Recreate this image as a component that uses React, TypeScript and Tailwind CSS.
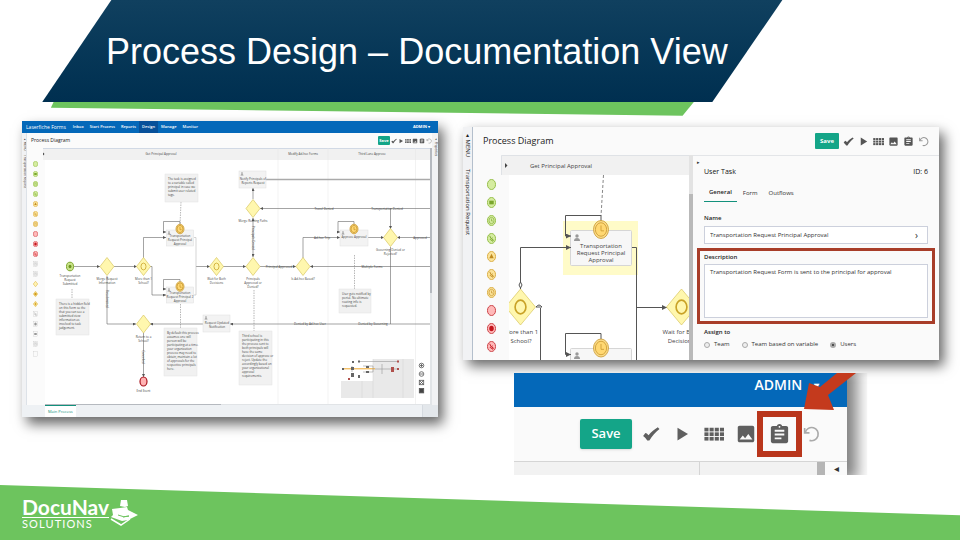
import type { ReactNode } from 'react';
import { MdAssignment, MdImage } from 'react-icons/md';

type Point = [number, number];

function CheckIcon({ className }: { className: string }) {
  return (
    <svg viewBox="0 0 24 24" className={className} fill="currentColor">
      <path d="M1.5 14.5l3-4c1.800 .4 3 1.500 4.200 3C12.500 9 16.500 5.800 21 3l2.300 2.300C18 9.500 13.500 14.800 9.800 20.800H7C5.500 18 3.800 16 1.500 14.500z" />
    </svg>
  );
}

function PlayIcon({ className }: { className: string }) {
  return (
    <svg viewBox="0 0 24 24" className={className} fill="currentColor">
      <path d="M6 3.500v17L20 12z" />
    </svg>
  );
}

function GridIcon({ className }: { className: string }) {
  return (
    <svg viewBox="0 0 24 24" className={className} fill="currentColor">
      {[4.5, 10, 15.5].map((y) =>
        [0.5, 6.7, 12.900, 19.1].map((x) => (
          <rect key={`${x}-${y}`} x={x} y={y} width="4.900" height="4.400" />
        )),
      )}
    </svg>
  );
}

function UndoIcon({ className }: { className: string }) {
  return (
    <svg viewBox="0 0 24 24" className={className} fill="none" stroke="currentColor" strokeWidth="2.200">
      <path d="M3.500 4v6.500H10" />
      <path d="M4.300 10A8.800 8.800 0 1 1 10 20.500" />
    </svg>
  );
}

function Toolbar({ button, icon, gap }: { button: string; icon: string; gap: string }) {
  return (
    <div className={`flex items-center text-[#555] ${gap}`}>
      <button className={`bg-[#14a588] font-bold text-white ${button}`}>Save</button>
      <button aria-label="Validate">
        <CheckIcon className={icon} />
      </button>
      <button aria-label="Run">
        <PlayIcon className={icon} />
      </button>
      <button aria-label="Grid">
        <GridIcon className={icon} />
      </button>
      <button aria-label="Image">
        <MdImage className={icon} />
      </button>
      <button aria-label="Documentation">
        <MdAssignment className={icon} />
      </button>
      <button aria-label="Undo" className="text-[#999]">
        <UndoIcon className={icon} />
      </button>
    </div>
  );
}

function Label({ x, y, lines, size = 'text-[3px]', step = 4, anchor = 'middle' }: {
  x: number;
  y: number;
  lines: string[];
  size?: string;
  step?: number;
  anchor?: 'start' | 'middle';
}) {
  return (
    <text textAnchor={anchor} className={`fill-[#444] ${size}`}>
      {lines.map((line, i) => (
        <tspan key={line} x={x} y={y + i * step}>
          {line}
        </tspan>
      ))}
    </text>
  );
}

function Note({ x, y, w, h, lines, step = 4 }: {
  x: number;
  y: number;
  w: number;
  h: number;
  lines: string[];
  step?: number;
}) {
  return (
    <g>
      <rect x={x} y={y} width={w} height={h} fill="#f1f1f1" stroke="#e3e3e3" strokeWidth="0.5" />
      <Label x={x + 3} y={y + 6} lines={lines} anchor="start" step={step} />
    </g>
  );
}

function Diamond({ at, rx = 7, ry = 9, ring }: { at: Point; rx?: number; ry?: number; ring?: boolean }) {
  const [x, y] = at;
  return (
    <g stroke="#d9c560">
      <path d={`M${x - rx} ${y}L${x} ${y - ry}L${x + rx} ${y}L${x} ${y + ry}Z`} fill="#fff7ae" strokeWidth="0.7" />
      {ring && (
        <ellipse cx={x} cy={y} rx={rx * 0.36} ry={ry * 0.38} fill="none" stroke="#c9a227" strokeWidth={rx * 0.11} />
      )}
    </g>
  );
}

function Clock({ at, rx, ry }: { at: Point; rx: number; ry: number }) {
  const [x, y] = at;
  return (
    <g stroke="#c9982f" fill="#fbdc8a" strokeWidth="0.8">
      <ellipse cx={x} cy={y} rx={rx} ry={ry} />
      <ellipse cx={x} cy={y} rx={rx * 0.75} ry={ry * 0.75} fill="#ffd873" />
      <path d={`M${x} ${y - ry * 0.45}V${y + ry * 0.15}H${x + rx * 0.4}`} fill="none" />
    </g>
  );
}

function Person({ x, y, s = 1 }: { x: number; y: number; s?: number }) {
  return (
    <g fill="#999">
      <circle cx={x} cy={y - 2 * s} r={1.700 * s} />
      <path d={`M${x - 3 * s} ${y + 3 * s}q0 ${-3 * s} ${3 * s} ${-3 * s}t${3 * s} ${3 * s}z`} />
    </g>
  );
}

const shapes = {
  green: 'fill-[#d5ecA0] stroke-[#8fbb3f]',
  amber: 'fill-[#fbe39a] stroke-[#d8a93c]',
  red: 'fill-[#ffb9b9] stroke-[#c8373c]',
  box: 'fill-[#fafafa] stroke-[#b5b5b5]',
  gold: 'fill-[#fff3b0] stroke-[#dcae3a]',
};

type Kind = { tone: keyof typeof shapes; mark: string };

const palette: Kind[] = [
  { tone: 'green', mark: '' },
  { tone: 'green', mark: 'mail' },
  { tone: 'green', mark: 'clock' },
  { tone: 'green', mark: 'signal' },
  { tone: 'amber', mark: 'triangle' },
  { tone: 'amber', mark: 'signal' },
  { tone: 'amber', mark: 'clock' },
  { tone: 'red', mark: '' },
  { tone: 'red', mark: 'dot' },
  { tone: 'red', mark: 'signal' },
  { tone: 'box', mark: 'clock' },
  { tone: 'box', mark: 'clock' },
  { tone: 'gold', mark: '' },
  { tone: 'gold', mark: 'dot' },
  { tone: 'gold', mark: 'plus' },
  { tone: 'box', mark: 'signal' },
  { tone: 'box', mark: 'dot' },
  { tone: 'box', mark: 'mail' },
  { tone: 'box', mark: 'clock' },
  { tone: 'box', mark: '' },
];

const ink = {
  green: '#7aa62c',
  amber: '#c08a1e',
  red: '#c4141c',
  box: '#999',
  gold: '#d29a1c',
};

function PaletteItem({ item, className }: { item: Kind; className: string }) {
  const color = ink[item.tone];
  return (
    <svg viewBox="0 0 20 24" preserveAspectRatio="none" className={className}>
      {item.tone === 'gold' && <path d="M1 12L10 1L19 12L10 23Z" className={shapes.gold} strokeWidth="2" />}
      {item.tone === 'box' && <rect x="3" y="3" width="14" height="18" className={shapes.box} strokeWidth="1" />}
      {item.tone !== 'gold' && item.tone !== 'box' && (
        <ellipse cx="10" cy="12" rx="9" ry="11" className={shapes[item.tone]} strokeWidth="2" />
      )}
      {item.mark === 'mail' && <rect x="5" y="8" width="10" height="8" fill={color} />}
      {item.mark === 'dot' && <ellipse cx="10" cy="12" rx="5" ry="6" fill={color} />}
      {item.mark === 'triangle' && <path d="M5 16L10 6L15 16Z" fill={color} />}
      {item.mark === 'signal' && <path d="M6 6l3 6-2 2 6 4 1-3-4-2 2-3" fill="none" stroke={color} strokeWidth="2" />}
      {item.mark === 'plus' && <path d="M10 6v12M5 12h10" stroke={color} strokeWidth="3" />}
      {item.mark === 'clock' && (
        <g fill="none" stroke={color} strokeWidth="1.300">
          <ellipse cx="10" cy="12" rx="5.500" ry="7" />
          <path d="M10 8v5h3" />
        </g>
      )}
    </svg>
  );
}

function ArrowHead({ id, size }: { id: string; size: number }) {
  return (
    <marker id={id} viewBox="0 0 6 6" refX="6" refY="3" markerWidth={size} markerHeight={size} markerUnits="userSpaceOnUse" orient="auto-start-reverse">
      <path d="M0 0L6 3L0 6Z" fill="#555" />
    </marker>
  );
}

const flows = [
  'M74 266.500H100',
  'M114 266.500H137',
  'M143.500 258V237.500H166',
  'M150 266.500H152V295H166',
  'M196 266.500H210',
  'M223 266.500H246',
  'M260 266.500H296',
  'M431 266.500H310',
  'M253 199V188',
  'M303 258V237.500H340',
  'M368 237.500H384',
  'M431 237.500H397',
  'M431 208.500H260',
  'M390.500 208.500V229',
  'M107 276V324H136',
  'M203 324H150',
  'M431 324H230',
  'M143.500 333V377',
  'M180 225V221.500H163.500V232H166',
  'M180 282V279.500H163.500V289H166',
  'M354 225V221.500H338V232H340',
];

function OverviewDiagram() {
  return (
    <svg viewBox="43 148 389 257" className="block min-w-0 flex-1" role="img" aria-label="Process overview">
      <defs>
        <ArrowHead id="tip" size={3} />
      </defs>
      <rect x="45" y="160" width="386" height="245" fill="#fff" />
      <rect x="43" y="148" width="388" height="12" fill="#f1f1f1" />
      <path d="M43 148.500H431" stroke="#c3cfe0" strokeWidth="0.7" />
      <path d="M278 148V405M328 148V405M415.500 148V405" stroke="#e4e4e4" strokeWidth="0.5" />
      <path d="M43 152.500l1.500 1.500-1.500 1.500z" fill="#444" />
      <Label x={161} y={155} lines={['Get Principal Approval']} />
      <Label x={303} y={155} lines={['Modify Ad-hoc Forms']} />
      <Label x={372} y={155} lines={['Third Lane Approve']} />

      <g fill="none" stroke="#666" strokeWidth="0.6">
        {flows.map((d) => (
          <path key={d} d={d} markerEnd="url(#tip)" />
        ))}
        <path d="M253 218V257" markerStart="url(#tip)" markerEnd="url(#tip)" />
        <path d="M194 237.500H196V295H194" stroke="#bbb" />
        <path d="M390.500 247V324" />
        <path d="M266 179.500H431" stroke="#aaa" strokeWidth="1.500" />
        <path d="M181 202L180 225M180.500 304V328M254 290V331M354.500 255V289M72 289V299" stroke="#888" strokeDasharray="1.500 1" />
      </g>

      <Note x={165} y={174} w={33} h={28} lines={['The task is assigned', 'to a variable called', 'principal in case we', 'submit user related', 'tags.']} />
      <Note x={56} y={299} w={33} h={36} lines={['There is a hidden field', 'on this form so the', 'that you can see a', 'submitted view', 'information as', 'involved to task', 'judgement.']} />
      <Note x={164} y={328} w={33} h={48} lines={['By default this process', 'assumes one will', 'person will be', 'participating at a time.', 'your organization', 'process may need to', 'obtain, maintain a lot', 'of approvals for the', 'respective principals', 'here.']} />
      <Note x={239} y={331} w={33} h={54} lines={['Third school is', 'participating in this', 'the process sent to', 'both principals will', 'have the same', 'decision of approve or', 'reject. Update the', 'accordingly based on', 'your organizational', 'approval', 'requirements.']} />
      <Note x={339} y={289} w={32} h={24} lines={['User gets notified by', 'portal. No ultimate', 'routing info is', 'requested.']} />

      <g fill="#f3f3f3" stroke="#dedede" strokeWidth="0.5">
        <rect x="166.500" y="230" width="27" height="16" />
        <rect x="166.500" y="287" width="27" height="16" />
        <rect x="239" y="171" width="27" height="17" />
        <rect x="203" y="315" width="27" height="17" />
        <rect x="340" y="230" width="28" height="16" />
      </g>
      <Person x={169} y={233} s={0.5} />
      <Person x={169} y={290} s={0.5} />
      <Person x={242} y={174} s={0.5} />
      <Person x={206} y={318} s={0.5} />
      <Person x={343} y={233} s={0.5} />
      <Clock at={[180, 229]} rx={4} ry={4.800} />
      <Clock at={[180, 286.500]} rx={4} ry={4.800} />
      <Clock at={[354, 229]} rx={4} ry={4.800} />
      <Label x={180} y={237} lines={['Transportation', 'Request Principal', 'Approval']} />
      <Label x={180} y={294} lines={['Transportation', 'Request Principal 2', 'Approval']} />
      <Label x={253} y={180} lines={['Notify Principals of', 'Reports Request']} />
      <Label x={217} y={324} lines={['Request Updated', 'Notification']} />
      <Label x={354} y={238} lines={['Approve Approval']} />

      <Diamond at={[107, 266.500]} />
      <Diamond at={[143.500, 266.500]} ring />
      <Diamond at={[216.500, 266.500]} ring />
      <Diamond at={[253, 266.500]} />
      <Diamond at={[303, 266.500]} />
      <Diamond at={[253, 208.500]} />
      <Diamond at={[390.500, 237.500]} />
      <Diamond at={[143.500, 324]} />
      <ellipse cx="70" cy="266.500" rx="3.500" ry="4.300" fill="#c9e48a" stroke="#7ba428" />
      <ellipse cx="70" cy="266.500" rx="1.500" ry="1.800" fill="#6d9420" />
      <ellipse cx="143.500" cy="381.500" rx="3.500" ry="4.500" fill="#ffb3b3" stroke="#a8141e" strokeWidth="1.200" />

      <Label x={70} y={277} lines={['Transportation', 'Request', 'Submitted']} />
      <Label x={107} y={280} lines={['Merge Request', 'Information']} />
      <Label x={143.500} y={280} lines={['More than 1', 'School?']} />
      <Label x={216.500} y={280} lines={['Wait for Both', 'Decisions']} />
      <Label x={253} y={280} lines={['Principals', 'Approved or', 'Denied?']} />
      <Label x={303} y={280} lines={['Is Ad-hoc Based?']} />
      <Label x={253} y={222} lines={['Merge Routing Paths']} />
      <Label x={390.500} y={251} lines={['Governing Denied or', 'Rejected?']} />
      <Label x={143.500} y={338} lines={['Return to a', 'School?']} />
      <Label x={143.500} y={392} lines={['End Event']} />
      <Label x={279} y={267.500} lines={['Principal Approved']} />
      <Label x={324} y={209.500} lines={['Travel Denied']} />
      <Label x={387} y={209.500} lines={['Transportation Denied']} />
      <Label x={322} y={238.500} lines={['Ad-hoc Trip']} />
      <Label x={420} y={238.500} lines={['Approved']} />
      <Label x={372} y={267.500} lines={['Multiple Forms']} />
      <Label x={310} y={325} lines={['Denied by Ad-hoc User']} />
      <Label x={373} y={325} lines={['Denied by Governing']} />
      <g textAnchor="middle" className="fill-[#444] text-[3px]">
        <text transform="translate(252 238) rotate(90)">Principals Denied</text>
        <text transform="translate(106 299) rotate(90)">Resubmitted</text>
        <text transform="translate(142 357) rotate(90)">Cancelled</text>
      </g>

      <rect x="341" y="359" width="73" height="39" fill="#e9e9e9" />
      <rect x="341" y="359" width="32" height="22" fill="#fff" />
      <path d="M362 381V398M373 359V398M403 359V398" stroke="#d0d0d0" strokeWidth="0.5" />
      <path d="M343 368.800H375" stroke="#f0a92e" strokeWidth="1" />
      <path d="M359 361.500H398M375 369H398M363 366h10v6h-10M352 366v6M382 364v10" fill="none" stroke="#999" strokeWidth="0.6" />
      <path d="M342 368h2v2h-2zM351 367h3v3h-3zM358 360.500h2v2h-2zM366 366h3v2h-3zM366 371h3v2h-3zM352 361h2v2h-2zM351 373h3v4h-3zM358 375h2v3h-2z" fill="#666" />
      <path d="M348 378h2v2h-2zM397 360.500h2v2h-2zM391 367h3v5h-3zM397 368h2v2h-2z" fill="#b0504c" />
      <g fill="none" stroke="#555" strokeWidth="0.8">
        <circle cx="421.500" cy="365.500" r="2.300" />
        <path d="M420 365.500H423M421.500 364V367M420 374H423M420 381l3 3m0-3l-3 3" />
        <circle cx="421.500" cy="374" r="2.300" />
        <rect x="419.300" y="380.300" width="4.400" height="4.400" />
        <rect x="419.300" y="388.500" width="4.400" height="4.400" fill="#444" />
      </g>
      <path d="M431 148V293" stroke="#b5b9bf" strokeWidth="2" />
      <path d="M431 293V405" stroke="#e1e4e7" strokeWidth="2" />
      <path d="M45 405H221" stroke="#b5b9bf" strokeWidth="2" />
      <path d="M221 405H431" stroke="#e1e4e7" strokeWidth="2" />
    </svg>
  );
}

function SideStrip({ className, children }: { className: string; children: ReactNode }) {
  return (
    <aside className={`flex shrink-0 items-center overflow-hidden whitespace-nowrap bg-[#f1f2f4] [writing-mode:vertical-rl] ${className}`}>
      {children}
    </aside>
  );
}

function OverviewPanel() {
  const nav = ['Inbox', 'Start Process', 'Reports', 'Design', 'Manage', 'Monitor'];
  return (
    <section className="flex flex-col self-start bg-[#fbfbfb] text-[4px] leading-none shadow-[5px_7px_12px_rgba(0,0,0,0.6)]">
      <header className="flex h-3 items-center bg-[#0468b9] pl-1 pr-2 text-white">
        <strong className="text-[5px] font-normal">Laserfiche Forms</strong>
        <nav className="ml-1 flex items-center font-semibold">
          {nav.map((item) => (
            <a key={item} href="#" className={item === 'Design' ? 'bg-[#07509a] px-[3px] py-1' : 'px-[3px] py-1'}>
              {item}
            </a>
          ))}
        </nav>
        <span className="ml-auto font-bold">ADMIN ▾</span>
      </header>
      <div className="flex">
        <SideStrip className="w-[5px] gap-1 border-r border-[#dde2e8] pt-1 text-[3px] text-[#333]">
          <span>▴ MENU</span>
          <span>Transportation Request</span>
        </SideStrip>
        <div className="min-w-0 flex-1">
          <div className="flex h-[15px] items-center justify-between pl-1">
            <h2 className="text-[5px] text-[#222]">Process Diagram</h2>
            <Toolbar button="h-[9px] w-3 rounded-[1px]" icon="size-[6px]" gap="gap-px" />
          </div>
          <div className="flex">
            <div className="flex w-4 shrink-0 flex-col items-center gap-1 pt-[13px]">
              {palette.map((item, i) => (
                <PaletteItem key={i} item={item} className="h-[6px] w-[5px]" />
              ))}
            </div>
            <OverviewDiagram />
          </div>
        </div>
        <SideStrip className="w-[6px] pt-1 text-[3px] text-[#333]">
          <span>◂ Properties</span>
        </SideStrip>
      </div>
      <footer className="flex h-3 justify-between bg-[#eef1f4] pl-[23px]">
        <button className="border-t border-[#12917c] bg-white px-[3px] text-[#12917c]">Main Process</button>
        <span className="w-4 border-l border-[#d5dae0] bg-[#e3e7eb]" />
      </footer>
    </section>
  );
}

function DetailDiagram() {
  return (
    <svg viewBox="501 155 188 205" className="block min-w-0 flex-1" role="img" aria-label="Get Principal Approval">
      <defs>
        <ArrowHead id="tip-large" size={5} />
      </defs>
      <rect x="501" y="155" width="188" height="20" fill="#f1f1f1" />
      <rect x="509" y="175" width="180" height="185" fill="#fff" />
      <path d="M501.500 175V155.500H689" fill="none" stroke="#dfe2e6" />
      <path d="M505 163l2.500 2.500-2.500 2.500z" fill="#444" />
      <Label x={561} y={168} lines={['Get Principal Approval']} size="text-[6px]" />

      <rect x="563" y="221" width="75" height="54" fill="#fffbc8" />
      <g fill="#f7f7f7" stroke="#d6d6d6">
        <rect x="570.500" y="230.500" width="61" height="35" rx="1" />
        <rect x="570.500" y="348.500" width="61" height="20" rx="1" />
      </g>
      <g fill="none" stroke="#555" strokeWidth="1">
        <path d="M603.500 175L601 216" stroke="#888" strokeDasharray="3 2" />
        <path d="M601 221V215.500H565.500V236H571" markerEnd="url(#tip-large)" />
        <path d="M601 339V333.500H565.500V354.500H571" markerEnd="url(#tip-large)" />
        <path d="M520.500 289V247.500H571" markerEnd="url(#tip-large)" />
        <path d="M632 247.500H636.500V360" />
        <path d="M636.500 307.500H667" markerEnd="url(#tip-large)" />
        <path d="M536 307q3-4 6 0h-6M540.500 308V360" />
        <path d="M520.500 282l1.500 3-1.500 3-1.500-3z" fill="#fff" />
      </g>
      <Person x={577} y={238} />
      <Person x={577} y={356} />
      <Clock at={[601, 229.500]} rx={7.500} ry={9} />
      <Clock at={[601, 348]} rx={7.500} ry={9} />
      <Label x={601} y={248} lines={['Transportation', 'Request Principal', 'Approval']} size="text-[6px]" step={7} />
      <svg x="509" y="280" width="180" height="80" viewBox="509 280 180 80">
        <Diamond at={[520.500, 307]} rx={15} ry={18} ring />
        <Diamond at={[681.500, 307]} rx={15} ry={18} ring />
        <Label x={521} y={334} lines={['More than 1', 'School?']} size="text-[6px]" step={9} />
        <Label x={681} y={334} lines={['Wait for Both', 'Decisions']} size="text-[6px]" step={9} />
      </svg>
    </svg>
  );
}

function TaskProperties() {
  return (
    <form className="flex-1 border-t border-[#e3e5e8] px-1 text-[6px] leading-[7px] text-[#333]">
      <div className="pt-1 text-[5px] leading-[5px]">▸</div>
      <div className="flex justify-between px-[7px] pt-[2px] text-[7px] leading-[9px] text-[#111]">
        <h3>User Task</h3>
        <span>ID: 6</span>
      </div>
      <div className="mt-3 flex gap-1 px-[7px] leading-[9px]">
        <button type="button" className="border-b border-[#12917c] px-[5px] pb-1 font-semibold text-[#222]">
          General
        </button>
        <button type="button" className="px-[2px] pb-1">
          Form
        </button>
        <button type="button" className="px-[5px] pb-1">
          Outflows
        </button>
      </div>
      <div className="mt-[13px] px-[7px]">
        <label htmlFor="task-name" className="block font-semibold text-[#222]">
          Name
        </label>
        <div className="mt-1 flex h-[18px] items-center border border-[#ccd0dc] bg-white px-[5px]">
          <input id="task-name" defaultValue="Transportation Request Principal Approval" className="min-w-0 flex-1 outline-none" />
          <span className="px-1 text-[10px]">›</span>
        </div>
      </div>
      <div className="mt-1 border-[3px] border-[#a83d29] px-1 pb-[3px] pt-px">
        <label htmlFor="task-description" className="block py-[2px] font-semibold text-[#222]">
          Description
        </label>
        <textarea
          id="task-description"
          defaultValue="Transportation Request Form is sent to the principal for approval"
          className="mt-px block h-[54px] w-full resize-none border border-[#ccd0dc] bg-white px-[5px] py-1 outline-none"
        />
      </div>
      <fieldset className="mt-[5px] px-[7px]">
        <legend className="font-semibold text-[#222]">Assign to</legend>
        <div className="mt-[5px] flex gap-3">
          {['Team', 'Team based on variable', 'Users'].map((option) => (
            <label key={option} className="flex items-center gap-1">
              <input
                type="radio"
                name="assign"
                defaultChecked={option === 'Users'}
                className="size-[6px] appearance-none rounded-full border border-[#aaa] bg-[#eee] checked:border-2 checked:bg-[#333]"
              />
              {option}
            </label>
          ))}
        </div>
      </fieldset>
    </form>
  );
}

function DetailPanel() {
  return (
    <section className="flex bg-[#fafafa] shadow-[5px_6px_12px_rgba(0,0,0,0.6)]">
      <SideStrip className="w-[10px] gap-3 border-r border-[#b4bfcc] pt-1 text-[6px] leading-none text-[#222]">
        <span>▴ MENU</span>
        <span>Transportation Request</span>
      </SideStrip>
      <div className="min-w-0 flex-1">
        <div className="flex h-7 items-center justify-between pl-[10px] pr-[10px]">
          <h2 className="text-[9px] text-[#222]">Process Diagram</h2>
          <Toolbar button="h-4 w-6 rounded-[1px] text-[6px]" icon="size-[11px]" gap="gap-1" />
        </div>
        <div className="flex">
          <div className="flex min-w-0 basis-[216px]">
            <div className="flex w-7 shrink-0 flex-col items-center gap-[7px] pl-2 pt-6">
              {palette.slice(0, 10).map((item, i) => (
                <PaletteItem key={i} item={item} className="h-[11px] w-[9px]" />
              ))}
            </div>
            <DetailDiagram />
          </div>
          <div className="flex w-1 shrink-0 flex-col bg-[#b9b9b9]">
            <span className="h-[39px] bg-[#e3e3e3]" />
          </div>
          <TaskProperties />
        </div>
      </div>
    </section>
  );
}

function ToolbarCloseup() {
  return (
    <section className="relative ml-[51px] mt-[13px] w-[70%] bg-[#fafafa] shadow-[4px_0_14px_6px_rgba(0,0,0,0.5)] [clip-path:inset(0_-20px_0_0)]">
      <div className="flex h-[34px] justify-end gap-3 bg-[#0468b9] pr-7 pt-[2px] text-[14px] leading-5 font-semibold text-white">
        ADMIN <span className="text-[10px]">▾</span>
      </div>
      <div className="flex h-[54px] items-center pl-[66px] text-[#5f5f5f]">
        <button className="h-[30px] w-[52px] rounded-[2px] bg-[#14a588] text-[13px] font-semibold text-white shadow-sm">
          Save
        </button>
        <button aria-label="Validate" className="ml-[10px]">
          <CheckIcon className="size-[18px]" />
        </button>
        <button aria-label="Run" className="ml-[13px]">
          <PlayIcon className="size-[18px]" />
        </button>
        <button aria-label="Grid" className="ml-[13px]">
          <GridIcon className="size-5" />
        </button>
        <button aria-label="Image" className="ml-[11px]">
          <MdImage className="size-[22px]" />
        </button>
        <button aria-label="Documentation" className="flex h-[46px] w-[45px] items-center justify-center border-[6px] border-[#b9361c]">
          <MdAssignment className="size-[23px]" />
        </button>
        <button aria-label="Undo" className="text-[#aaa]">
          <UndoIcon className="size-[18px]" />
        </button>
      </div>
      <div className="flex h-[14px] border-t border-[#d5d5d5] bg-[#f2f2f2]">
        <span className="w-[186px] border-r border-[#d5d5d5]" />
        <span className="flex-1" />
        <span className="w-2 bg-[#b5b5b5]" />
        <span className="flex w-[22px] items-center justify-center bg-[#fafafa] text-[10px] text-[#333]">◂</span>
      </div>
      <svg viewBox="0 0 54 40" className="absolute -right-[9px] top-0 h-10 w-[54px]">
        <path d="M2 36L7 10L18 14L35 0H54L26 22L32 37Z" fill="#c43a1d" />
      </svg>
    </section>
  );
}

function Logo() {
  return (
    <a href="#" className="flex items-start font-['Lato',sans-serif] text-white">
      <span className="flex flex-col">
        <span className="border-b border-white text-[21px] font-bold leading-5">DocuNav</span>
        <span className="text-[11px] leading-[11px] tracking-widest">SOLUTIONS</span>
      </span>
      <svg viewBox="0 0 30 30" className="mt-[2px] size-[30px]" fill="currentColor">
        <path d="M12 1h6l1 6-3 1-5-1z" />
        <path d="M3 10l8-1 7-1 1 3 10 5-10 5-6 1-11-4 2-2z" />
        <path d="M2 20l10 6 9-6" fill="none" stroke="currentColor" strokeWidth="1.500" />
        <path d="M9 16q6 3 11 1l-6 1" fill="none" stroke="#6dc45e" />
      </svg>
    </a>
  );
}

export default function App() {
  return (
    <div className="flex min-h-screen flex-col overflow-hidden bg-white font-['Open_Sans',sans-serif]">
      <header className="grid h-[117px]">
        <div className="bg-[#6dc45e] [clip-path:polygon(6%_80%,73%_80%,71.100%_99%,5.300%_92%)] [grid-area:1/1]" />
        <div className="flex h-[102px] bg-linear-to-b from-[#10405f] to-[#002f50] pl-[106px] pt-[32px] [clip-path:polygon(11.600%_0,81.500%_0,74.200%_100%,4.400%_100%)] [grid-area:1/1]">
          <h1 className="whitespace-nowrap font-['Liberation_Sans',sans-serif] text-[36px] leading-10 text-white">
            Process Design – Documentation View
          </h1>
        </div>
      </header>
      <main className="grid grid-cols-[416fr_476fr] gap-x-[25px] pl-[22px] pr-[21px] pt-1">
        <OverviewPanel />
        <div className="min-w-0 pt-[6px]">
          <DetailPanel />
          <ToolbarCloseup />
        </div>
      </main>
      <footer className="mt-auto h-[55px] bg-[#6dc45e] pl-[22px] pt-3 [clip-path:polygon(0_0,100%_55%,100%_100%,0_100%)]">
        <Logo />
      </footer>
    </div>
  );
}
